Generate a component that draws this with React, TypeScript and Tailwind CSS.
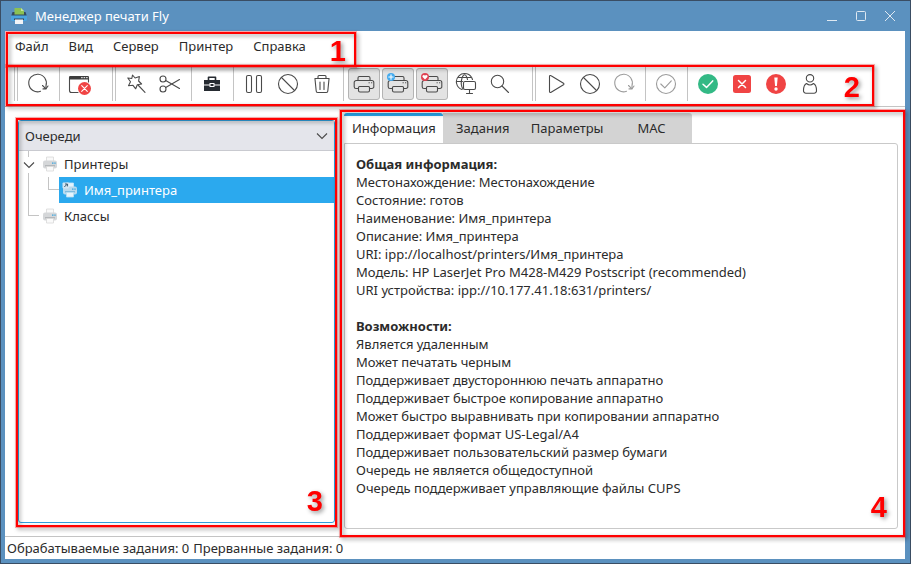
import { useState } from "react";
import type { ReactNode } from "react";

function Svg({ children, muted = false }: { children: ReactNode; muted?: boolean }) {
  return (
    <svg
      viewBox="0 0 24 24"
      width="24"
      height="24"
      fill="none"
      stroke={muted ? "#9b9b9b" : "#4a4a4a"}
      strokeWidth="1.1"
      strokeLinecap="round"
      strokeLinejoin="round"
      aria-hidden="true"
    >
      {children}
    </svg>
  );
}

const RefreshIcon = ({ muted = false }: { muted?: boolean }) => (
  <Svg muted={muted}>
    <path d="M14.500 19.300A8.800 8.800 0 1 1 20 13.500V16.500" />
    <path d="M16.500 13.500l3.500 3.300 2-2.800M17 16.900h3" />
  </Svg>
);

const WindowCloseIcon = () => (
  <Svg>
    <path d="M10 20.500H3.500a2 2 0 0 1-2-2V5.500a1 1 0 0 1 1-1h17a1 1 0 0 1 1 1V10" />
    <path d="M2 4.500h18v2.500H2z" fill="#3c3c3c" stroke="#3c3c3c" />
    <path d="M13.500 5.700h.8M16 5.700h.8M18.500 5.700h.8" stroke="#fff" strokeWidth="1" />
    <circle cx="16.500" cy="16.500" r="6.500" fill="#f04444" stroke="none" />
    <path d="M13.700 13.700l5.600 5.600M19.300 13.700l-5.600 5.600" stroke="#fff" />
  </Svg>
);

const WandIcon = () => (
  <Svg>
    <path d="M8.500 3l2.600 3 4.300-1.400-.8 4.400 3 3-4.300.8-1.600 4-2.700-3.500-4.500.5 2-4L3.800 6l4 .5z" />
    <path d="M14 13l7 7.300" />
  </Svg>
);

const ScissorsIcon = () => (
  <Svg>
    <circle cx="5" cy="7" r="3" />
    <circle cx="5" cy="17" r="3" />
    <path d="M7.700 8.500L21.500 16.500M7.700 15.500L21.500 7.500" />
  </Svg>
);

const BriefcaseIcon = () => (
  <Svg>
    <path d="M8.500 8V5.200h7V8" stroke="#262b31" strokeWidth="1.600" />
    <path d="M4 8h16v4.500h-5.500V11h-5v1.500H4z" fill="#262b31" stroke="none" />
    <path d="M4 13.500h5.500V15h5v-1.500H20V19H4z" fill="#262b31" stroke="none" />
    <path d="M10.500 12h3v2h-3z" fill="#262b31" stroke="none" />
  </Svg>
);

const PauseIcon = () => (
  <Svg>
    <rect x="4.500" y="3.500" width="5" height="17" rx="1.500" />
    <rect x="14.500" y="3.500" width="5" height="17" rx="1.500" />
  </Svg>
);

const BlockIcon = () => (
  <Svg>
    <circle cx="12" cy="12" r="9.500" />
    <path d="M5.500 5.500l13 13" />
  </Svg>
);

const TrashIcon = () => (
  <Svg>
    <path d="M5 7l1.200 12a1.500 1.500 0 0 0 1.500 1.500h8.600a1.500 1.500 0 0 0 1.500-1.500L19 7" />
    <path d="M5 6.500h14M8 6V4.500a1 1 0 0 1 1-1h6a1 1 0 0 1 1 1V6M10 10v7.500M14 10v7.500" />
  </Svg>
);

const PrinterIcon = ({ children }: { children?: ReactNode }) => (
  <Svg>
    <path d="M6 16.500H4A1.800 1.800 0 0 1 2.200 14.700V10.500A2 2 0 0 1 4.200 8.500h15.600a2 2 0 0 1 2 2v4.200a1.800 1.800 0 0 1-1.800 1.800h-2" />
    <path d="M6 8.500V6a1.500 1.500 0 0 1 1.500-1.500h9A1.500 1.500 0 0 1 18 6v2.500" />
    <path d="M7.500 14.500h9a1 1 0 0 1 1 1v3a1.500 1.500 0 0 1-1.500 1.500H8a1.500 1.500 0 0 1-1.500-1.500v-3a1 1 0 0 1 1-1z" />
    <path d="M17 10.700h.3M19.500 10.700h.3" />
    {children}
  </Svg>
);

const PrinterAddIcon = () => (
  <PrinterIcon>
    <circle cx="5" cy="5" r="4" fill="#45abee" stroke="none" />
    <path d="M5 2.800v4.400M2.800 5h4.400" stroke="#fff" />
  </PrinterIcon>
);

const PrinterHeartIcon = () => (
  <PrinterIcon>
    <circle cx="5" cy="5" r="4" fill="#df4353" stroke="none" />
    <path d="M5 7.500L2.600 5A1.300 1.300 0 0 1 5 3.700 1.300 1.300 0 0 1 7.400 5z" fill="#fff" stroke="none" />
  </PrinterIcon>
);

const GlobeIcon = () => (
  <Svg>
    <path d="M18.500 7.500A8.200 8.200 0 1 0 8 17.500" />
    <path d="M13.500 7.500C12 1.500 9.500 1.500 8 6c-1.200 4 -.7 8.500 1 11" />
    <path d="M4.500 5.500h12.500M2.500 9.500h6" />
    <rect x="9.500" y="9.500" width="12" height="8" rx="1.500" fill="#fff" />
    <path d="M15.500 17.500v4M12.500 21.500h6" />
  </Svg>
);

const SearchIcon = () => (
  <Svg>
    <circle cx="9.500" cy="9.500" r="6.200" />
    <path d="M14 14l6.500 6.500" />
  </Svg>
);

const PlayIcon = () => (
  <Svg>
    <path d="M5.500 4.500v15a1 1 0 0 0 1.600.8l12.400-7.500a1 1 0 0 0 0-1.600L7.100 3.700a1 1 0 0 0-1.600.8z" />
  </Svg>
);

const CheckIcon = () => (
  <Svg muted>
    <circle cx="12" cy="12" r="9.500" />
    <path d="M6.800 12l4 3.800 6.500-7" />
  </Svg>
);

const GreenCheckIcon = () => (
  <Svg>
    <circle cx="12" cy="12" r="10" fill="#33b985" stroke="none" />
    <path d="M7 12.200l3.500 3.200 6.200-6.500" stroke="#fff" strokeWidth="1.500" />
  </Svg>
);

const RedCrossIcon = () => (
  <Svg>
    <rect x="3" y="3" width="18" height="18" rx="2.500" fill="#f04444" stroke="none" />
    <path d="M8.500 8.500l7 7M15.500 8.500l-7 7" stroke="#fff" strokeWidth="1.500" />
  </Svg>
);

const AlertIcon = () => (
  <Svg>
    <circle cx="12" cy="12" r="10" fill="#f04444" stroke="none" />
    <path d="M10.300 5.500h3.400l-.8 8.500h-1.800z" fill="#fff" stroke="none" />
    <circle cx="12" cy="17" r="1.700" fill="#fff" stroke="none" />
  </Svg>
);

const UserIcon = () => (
  <Svg>
    <circle cx="12" cy="6.300" r="3.700" />
    <path d="M8.500 11.500C6.500 12.500 5.500 15 5.500 18.500a2.500 2.500 0 0 0 2.500 2.800h8a2.500 2.500 0 0 0 2.500-2.800c0-3.500-1-6-3-7a5.500 5.500 0 0 1-7 0z" />
  </Svg>
);

function AppLogo() {
  return (
    <svg viewBox="0 0 18 18" width="18" height="18" className="shrink-0" aria-hidden="true">
      <path d="M2.500 5h13l1.500 4.500H1z" fill="#34495e" />
      <path d="M4.500 1h6.500l3 3v3.500H4.500z" fill="#8cc152" />
      <path d="M11 1l3 3h-3z" fill="#c5e59b" />
      <path d="M1 8.500h16v4a1.500 1.500 0 0 1-1.500 1.500h-13A1.500 1.500 0 0 1 1 12.500z" fill="#4aa3e0" />
      <path d="M4 11.500h10v1.500H4z" fill="#34495e" />
      <path d="M5 12.500h8V17H5z" fill="#f2f4f7" />
    </svg>
  );
}

function QueueIcon({ selected = false }: { selected?: boolean }) {
  return (
    <svg viewBox="0 0 16 16" width="16" height="16" className="shrink-0" aria-hidden="true">
      <path d="M4.500 1h7v6h-7z" fill={selected ? "#e3f3fd" : "#f9f9f9"} stroke={selected ? "#c5e6fa" : "#d8d8d8"} strokeWidth=".8" />
      <rect x="1" y="4.500" width="14" height="8" rx="2" fill={selected ? "#b9daee" : "#d5d7d9"} />
      <path d="M3 9h10v1.500H3z" fill={selected ? "#7fbbdd" : "#b4b7ba"} />
      <path d="M10 6.500h1.500v1.200H10zM12.300 6.500h1.400v1.200h-1.400z" fill="#3aa5e0" />
      <path d="M4.500 10.500h7v4.500h-7z" fill={selected ? "#e6f4fc" : "#fafafa"} stroke={selected ? "#b8def4" : "#d8d8d8"} strokeWidth=".8" />
      {selected && (
        <>
          <rect x=".5" y=".5" width="6.500" height="6" rx="1" fill="#d3e6f2" />
          <path d="M2.300 5l2.700-2.700M3 2h2.400v2.400" stroke="#2b4a60" strokeWidth=".9" fill="none" />
        </>
      )}
    </svg>
  );
}

function Chevron() {
  return (
    <svg viewBox="0 0 12 8" width="12" height="8" fill="none" stroke="#4a4a4a" strokeWidth="1.100" aria-hidden="true">
      <path d="M1 1.500l5 5 5-5" />
    </svg>
  );
}

type Tool = { label: string; icon: ReactNode; pressed?: boolean; disabled?: boolean };

/* Each group opens with a drag handle; its sections are split by thin rules. */
const toolGroups: Tool[][][] = [
  [
    [{ label: "Обновить", icon: <RefreshIcon /> }],
    [{ label: "Закрыть окно", icon: <WindowCloseIcon /> }],
  ],
  [
    [
      { label: "Создать", icon: <WandIcon /> },
      { label: "Вырезать", icon: <ScissorsIcon /> },
    ],
    [{ label: "Свойства", icon: <BriefcaseIcon /> }],
    [
      { label: "Приостановить", icon: <PauseIcon /> },
      { label: "Отклонять задания", icon: <BlockIcon /> },
      { label: "Удалить", icon: <TrashIcon /> },
    ],
    [
      { label: "Принтеры", icon: <PrinterIcon />, pressed: true },
      { label: "Добавленные принтеры", icon: <PrinterAddIcon />, pressed: true },
      { label: "Избранные принтеры", icon: <PrinterHeartIcon />, pressed: true },
      { label: "Сетевые принтеры", icon: <GlobeIcon /> },
      { label: "Поиск", icon: <SearchIcon /> },
    ],
  ],
  [
    [
      { label: "Запустить", icon: <PlayIcon /> },
      { label: "Отменить", icon: <BlockIcon /> },
      { label: "Перезапустить", icon: <RefreshIcon muted />, disabled: true },
    ],
    [{ label: "Подтвердить", icon: <CheckIcon />, disabled: true }],
    [
      { label: "Выполненные", icon: <GreenCheckIcon /> },
      { label: "Отмененные", icon: <RedCrossIcon /> },
      { label: "Прерванные", icon: <AlertIcon /> },
      { label: "Пользователь", icon: <UserIcon /> },
    ],
  ],
];

/* Numbered call-out frame laid over a region of the window. */
function Callout({ n, frame, digit }: { n: number; frame: string; digit: string }) {
  return (
    <div
      className={`pointer-events-none absolute z-10 border-2 border-[#ff0000] ring-1 ring-[#ff0000]/30 drop-shadow-[2px_2px_2px_rgba(0,0,0,0.4)] ${frame}`}
    >
      <span className={`absolute font-['Liberation_Sans',sans-serif] text-[29px] leading-8 font-bold text-[#ff0000] ${digit}`}>
        {n}
      </span>
    </div>
  );
}

function Toolbar() {
  return (
    <div className="relative flex h-10 shrink-0 gap-4 border-b border-[#c4c4c4] pl-[9px]" role="toolbar" aria-label="Инструменты">
      {toolGroups.map((group, g) => (
        <div key={g} className="flex h-[34px]">
          <span className="mr-1 w-1 border-x border-[#c4c4c4]" />
          {group.map((section, s) => (
            <div key={s} className="flex">
              {s > 0 && <span className="mr-1 ml-[5px] w-px bg-[#c4c4c4]" />}
              <div className="flex gap-0.5 pt-px">
                {section.map((tool) => (
                  <button
                    key={tool.label}
                    aria-label={tool.label}
                    aria-pressed={tool.pressed}
                    disabled={tool.disabled}
                    className={`flex size-8 items-center justify-center rounded-[3px] border ${
                      tool.pressed ? "border-[#b4b4b4] bg-[#e3e3e3]" : "border-transparent"
                    }`}
                  >
                    {tool.icon}
                  </button>
                ))}
              </div>
            </div>
          ))}
        </div>
      ))}
      <Callout n={2} frame="-top-0.5 left-px h-[41px] w-[868px]" digit="right-3 top-1" />
    </div>
  );
}

function QueuePanel() {
  return (
    <section className="relative my-[13px] w-[317px] shrink-0 rounded-[3px] border border-[#2f9fdd]">
      <button className="flex h-[30px] w-full items-center justify-between border-b border-[#c9cad0] bg-[#e4e5eb] px-1.5">
        Очереди
        <Chevron />
      </button>
      <ul role="tree" aria-label="Очереди">
        <li role="treeitem" aria-expanded="true" aria-selected="false">
          <div className="flex h-[26px] items-center">
            <span className="mr-1 flex w-[19px] flex-col items-center self-stretch">
              <span className="h-1.5 w-px bg-[#c4c4c4]" />
              <button aria-label="Свернуть" className="my-1">
                <Chevron />
              </button>
              <span className="w-px grow bg-[#c4c4c4]" />
            </span>
            <QueueIcon />
            <span className="pl-1.5">Принтеры</span>
          </div>
          <ul role="group" className="flex h-[26px]">
            <li aria-hidden="true" className="ml-[9px] w-5 border-l border-[#c4c4c4]" />
            <li aria-hidden="true" className="mb-[13px] w-[11px] border-b border-l border-[#c4c4c4]" />
            <li role="treeitem" aria-selected="true" className="flex grow items-center bg-[#2ba9ee] pl-[3px] text-white">
              <QueueIcon selected />
              <span className="pl-1.5">Имя_принтера</span>
            </li>
          </ul>
        </li>
        <li role="treeitem" aria-selected="false" className="flex h-[26px] items-center">
          <span className="mr-[3px] mb-[13px] ml-[9px] h-[13px] w-[11px] border-b border-l border-[#c4c4c4]" />
          <QueueIcon />
          <span className="pl-1.5">Классы</span>
        </li>
      </ul>
      <Callout n={3} frame="-top-[3px] -right-[3px] -bottom-[5px] -left-[3px]" digit="right-3 bottom-2" />
    </section>
  );
}

const tabs = ["Информация", "Задания", "Параметры", "MAC"];

const general = [
  "Местонахождение: Местонахождение",
  "Состояние: готов",
  "Наименование: Имя_принтера",
  "Описание: Имя_принтера",
  "URI: ipp://localhost/printers/Имя_принтера",
  "Модель: HP LaserJet Pro M428-M429 Postscript (recommended)",
  "URI устройства: ipp://10.177.41.18:631/printers/",
];

const features = [
  "Является удаленным",
  "Может печатать черным",
  "Поддерживает двустороннюю печать аппаратно",
  "Поддерживает быстрое копирование аппаратно",
  "Может быстро выравнивать при копировании аппаратно",
  "Поддерживает формат US-Legal/A4",
  "Поддерживает пользовательский размер бумаги",
  "Очередь не является общедоступной",
  "Очередь поддерживает управляющие файлы CUPS",
];

function InfoPanel() {
  const [active, setActive] = useState(0);
  return (
    <section className="relative mt-1.5 mb-[7px] flex min-w-0 grow flex-col">
      <div role="tablist" className="flex h-[30px] shrink-0">
        {tabs.map((tab, i) => (
          <button
            key={tab}
            role="tab"
            aria-selected={i === active}
            onClick={() => setActive(i)}
            className={`min-w-20 ${
              i === active
                ? "rounded-t-[3px] border-t-3 border-[#2ba9ee] bg-white pr-[7px] pb-[3px] pl-2"
                : "bg-[#d3d3d3] px-2 last:rounded-tr-[3px]"
            }`}
          >
            {tab}
          </button>
        ))}
      </div>
      <div role="tabpanel" className="grow rounded-b-[3px] rounded-tr-[3px] border border-[#c9c9c9] px-[11px] pt-[11px]">
        <h2 className="font-bold">Общая информация:</h2>
        {general.map((line) => (
          <p key={line}>{line}</p>
        ))}
        <h2 className="mt-[18px] font-bold">Возможности:</h2>
        {features.map((line) => (
          <p key={line}>{line}</p>
        ))}
      </div>
      <Callout n={4} frame="-top-[3px] -right-[7px] -bottom-2 -left-1" digit="right-4 bottom-3" />
    </section>
  );
}

export default function App() {
  return (
    <div className="flex h-screen flex-col border border-[#3a4d63] bg-[#5b91bf] pr-[5px] pb-1 pl-1 font-['Noto_Sans',sans-serif] text-[13px] leading-[18px] text-[#2b2b2b]">
      <header className="flex h-[30px] shrink-0 items-center pr-[9px] pl-[5px] text-white">
        <AppLogo />
        <h1 className="grow pl-[7px]">Менеджер печати Fly</h1>
        <div className="flex gap-[17px]">
          <button aria-label="Свернуть">
            <svg viewBox="0 0 12 12" width="12" height="12" stroke="#dfe9f2" aria-hidden="true">
              <path d="M1 10.500h10" />
            </svg>
          </button>
          <button aria-label="Развернуть">
            <svg viewBox="0 0 12 12" width="12" height="12" fill="none" stroke="#dfe9f2" aria-hidden="true">
              <rect x="1.500" y="1.500" width="9" height="9" rx="1" />
            </svg>
          </button>
          <button aria-label="Закрыть">
            <svg viewBox="0 0 12 12" width="12" height="12" stroke="#dfe9f2" aria-hidden="true">
              <path d="M1 1l10 10M11 1L1 11" />
            </svg>
          </button>
        </div>
      </header>
      <div className="flex min-h-0 grow flex-col bg-white">
        <nav className="relative flex h-9 shrink-0 pb-1.5">
          {["Файл", "Вид", "Сервер", "Принтер", "Справка"].map((item) => (
            <button key={item} className="px-2.5">
              {item}
            </button>
          ))}
          <Callout n={1} frame="top-px bottom-0 left-px w-[350px]" digit="right-2 top-px" />
        </nav>
        <Toolbar />
        <main className="flex min-h-0 grow gap-[9px] pr-[7px] pl-[13px]">
          <QueuePanel />
          <InfoPanel />
        </main>
        <footer className="flex h-[23px] shrink-0 gap-1 border-t border-[#c4c4c4] px-0.5 pt-0.5">
          <span>Обрабатываемые задания: 0</span>
          <span>Прерванные задания: 0</span>
        </footer>
      </div>
    </div>
  );
}
